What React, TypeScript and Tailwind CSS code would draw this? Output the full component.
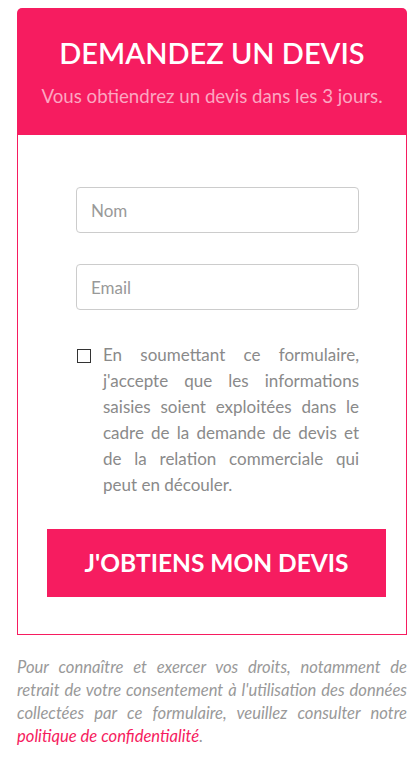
export default function App() {
  return (
    <div className="min-h-[759px] bg-white pt-2" style={{ fontFamily: 'Lato, "Open Sans", sans-serif' }}>
      <div className="ml-[17px] w-[390px]">
        <div className="rounded-t-[5px] bg-[#f61c60] h-[127px] pt-[27px] text-center">
          <h1 className="text-[29px] leading-[36px] font-semibold text-white">DEMANDEZ UN DEVIS</h1>
          <p className="mt-[13px] text-[18.7px] leading-[24px] text-[#fca6c1]">Vous obtiendrez un devis dans les 3 jours.</p>
        </div>
        <div className="border border-t-0 border-[#f61c60] h-[500px] pt-[52px]">
          <div className="ml-[58px] w-[283px] flex flex-col gap-[31px]">
            <input placeholder="Nom" className="h-[46px] rounded-[4px] border border-[#cccccc] px-[14px] text-[17px] text-[#555] placeholder:text-[#999] outline-none" />
            <input placeholder="Email" className="h-[46px] rounded-[4px] border border-[#cccccc] px-[14px] text-[17px] text-[#555] placeholder:text-[#999] outline-none" />
          </div>
          <div className="ml-[59px] w-[282px] mt-[32px] flex gap-[12px]">
            <span className="mt-[7px] h-[14px] w-[14px] shrink-0 border border-[#333] bg-white" />
            <p className="text-[17px] leading-[26px] text-[#8a8a8a] text-justify">
              En soumettant ce formulaire, j'accepte que les informations saisies soient exploitées dans le cadre de la demande de devis et de la relation commerciale qui peut en découler.
            </p>
          </div>
          <button className="mt-[31px] ml-[29px] w-[339px] h-[68px] bg-[#f61c60] text-white text-[24.5px] font-bold">
            J'OBTIENS MON DEVIS
          </button>
        </div>
        <p className="mt-[21px] text-[16.6px] leading-[23px] italic text-[#999] text-justify">
          Pour connaître et exercer vos droits, notamment de retrait de votre consentement à l'utilisation des données collectées par ce formulaire, veuillez consulter notre{' '}
          <a className="text-[#f61c60]">politique de confidentialité</a>.
        </p>
      </div>
    </div>
  );
}
